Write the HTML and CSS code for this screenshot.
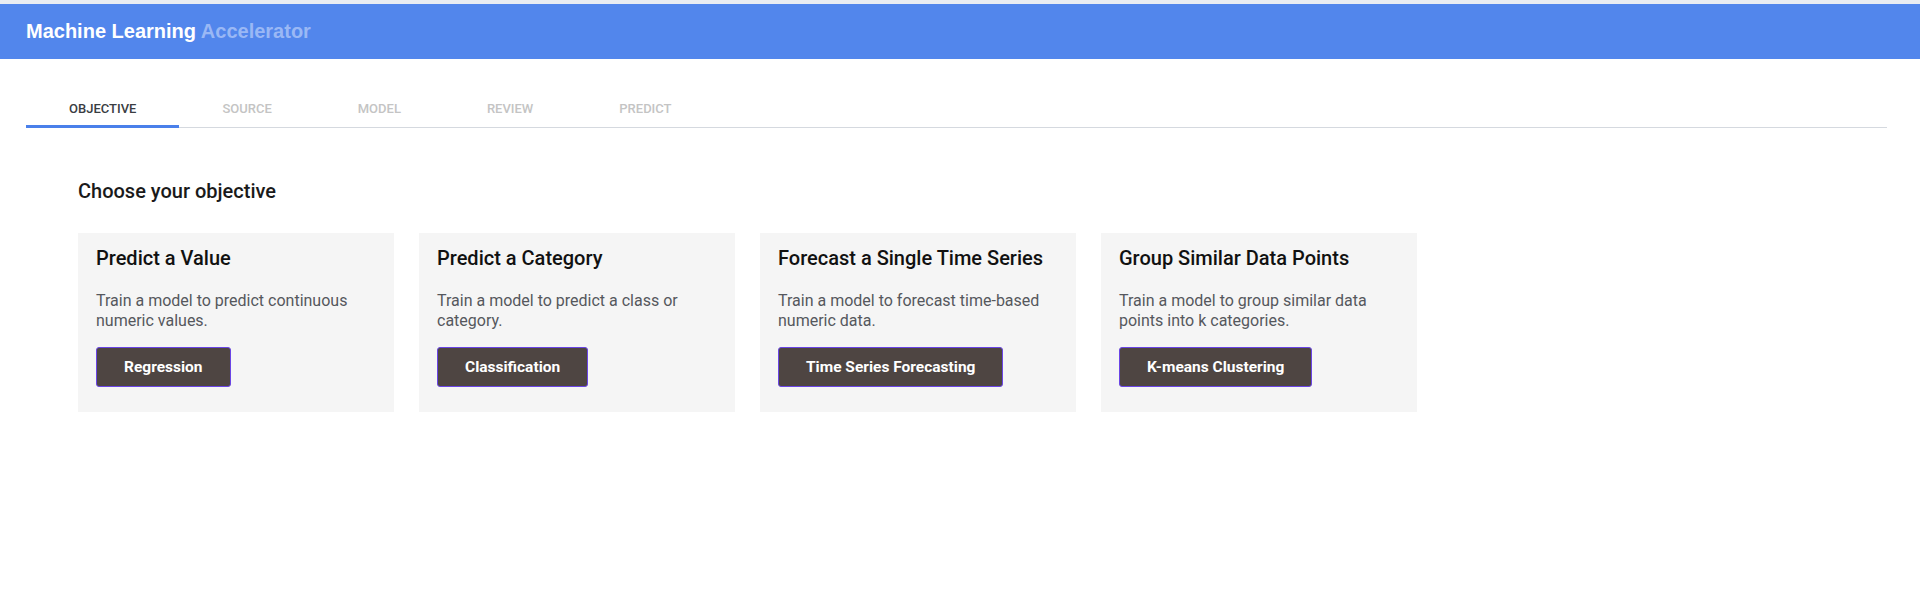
FILE: index.html
```html
<!DOCTYPE html>
<html lang="en">

<head>
    <meta charset="UTF-8">
    <meta name="viewport" content="width=device-width, initial-scale=1.0">
    <title>Machine Learning Accelerator</title>
    <link rel="stylesheet" href="styles.css">
</head>

<body>
<!-- top bar -->
<header class="app-bar">
    <span class="app-title">Machine Learning <span class="app-title-light">Accelerator</span></span>
</header>

<!-- steps -->
<nav class="steps">
    <div class="step active">Objective</div>
    <div class="step">Source</div>
    <div class="step">Model</div>
    <div class="step">Review</div>
    <div class="step">Predict</div>
</nav>

<main class="content">
    <h2 class="section-title">Choose your objective</h2>

    <div class="objective-list">
        <div class="objective-card">
            <h3 class="card-title">Predict a Value</h3>
            <p class="card-text">Train a model to predict continuous numeric values.</p>
            <button class="card-button">Regression</button>
        </div>
        <div class="objective-card">
            <h3 class="card-title">Predict a Category</h3>
            <p class="card-text">Train a model to predict a class or category.</p>
            <button class="card-button">Classification</button>
        </div>
        <div class="objective-card">
            <h3 class="card-title">Forecast a Single Time Series</h3>
            <p class="card-text">Train a model to forecast time-based numeric data.</p>
            <button class="card-button">Time Series Forecasting</button>
        </div>
        <div class="objective-card">
            <h3 class="card-title">Group Similar Data Points</h3>
            <p class="card-text">Train a model to group similar data points into k categories.</p>
            <button class="card-button">K-means Clustering</button>
        </div>
    </div>
</main>
</body>

</html>
```

FILE: styles.css
```css
body {
    font-family: Roboto, "Liberation Sans", Arial, sans-serif;
    margin: 0;
    padding: 0;
    background-color: #fff;
    border-top: 4px solid #e9ecf2;
}

/* top bar */
.app-bar {
    height: 55px;
    display: flex;
    align-items: center;
    padding: 0 26px;
    background-color: #5286ec;
}

.app-title {
    font-family: "Liberation Sans", Arial, sans-serif;
    font-size: 20px;
    font-weight: bold;
    color: #fff;
}

.app-title-light {
    color: #9ab8f5;
}

/* steps */
.steps {
    display: flex;
    margin: 33px 33px 0 26px;
    border-bottom: 1px solid #d5d9df;
}

.step {
    height: 33px;
    line-height: 33px;
    padding: 0 43px;
    margin-bottom: -1px;
    border-bottom: 3px solid transparent;
    font-size: 13px;
    font-weight: 500;
    text-transform: uppercase;
    color: #c4c4c4;
}

.step.active {
    color: #3a3d42;
    border-bottom-color: #4a80ea;
}

/* content */
.content {
    padding: 0 78px;
}

.section-title {
    margin: 51px 0 30px;
    font-size: 20px;
    line-height: 24px;
    font-weight: 500;
    color: #1a1a1a;
}

.objective-list {
    display: flex;
    gap: 25px;
}

.objective-card {
    width: 316px;
    box-sizing: border-box;
    padding: 13px 18px 25px;
    background-color: #f5f5f5;
}

.card-title {
    margin: 0 0 21px;
    font-size: 20px;
    line-height: 24px;
    font-weight: 500;
    color: #111;
}

.card-text {
    margin: 0 0 16px;
    font-size: 16px;
    line-height: 20px;
    color: #55585d;
}

.card-button {
    height: 40px;
    padding: 0 27px;
    font-family: Roboto, sans-serif;
    font-size: 15.5px;
    font-weight: bold;
    color: #fff;
    background-color: #4e4542;
    border: 1px solid #6a45e6;
    border-radius: 3px;
    cursor: pointer;
}
```
